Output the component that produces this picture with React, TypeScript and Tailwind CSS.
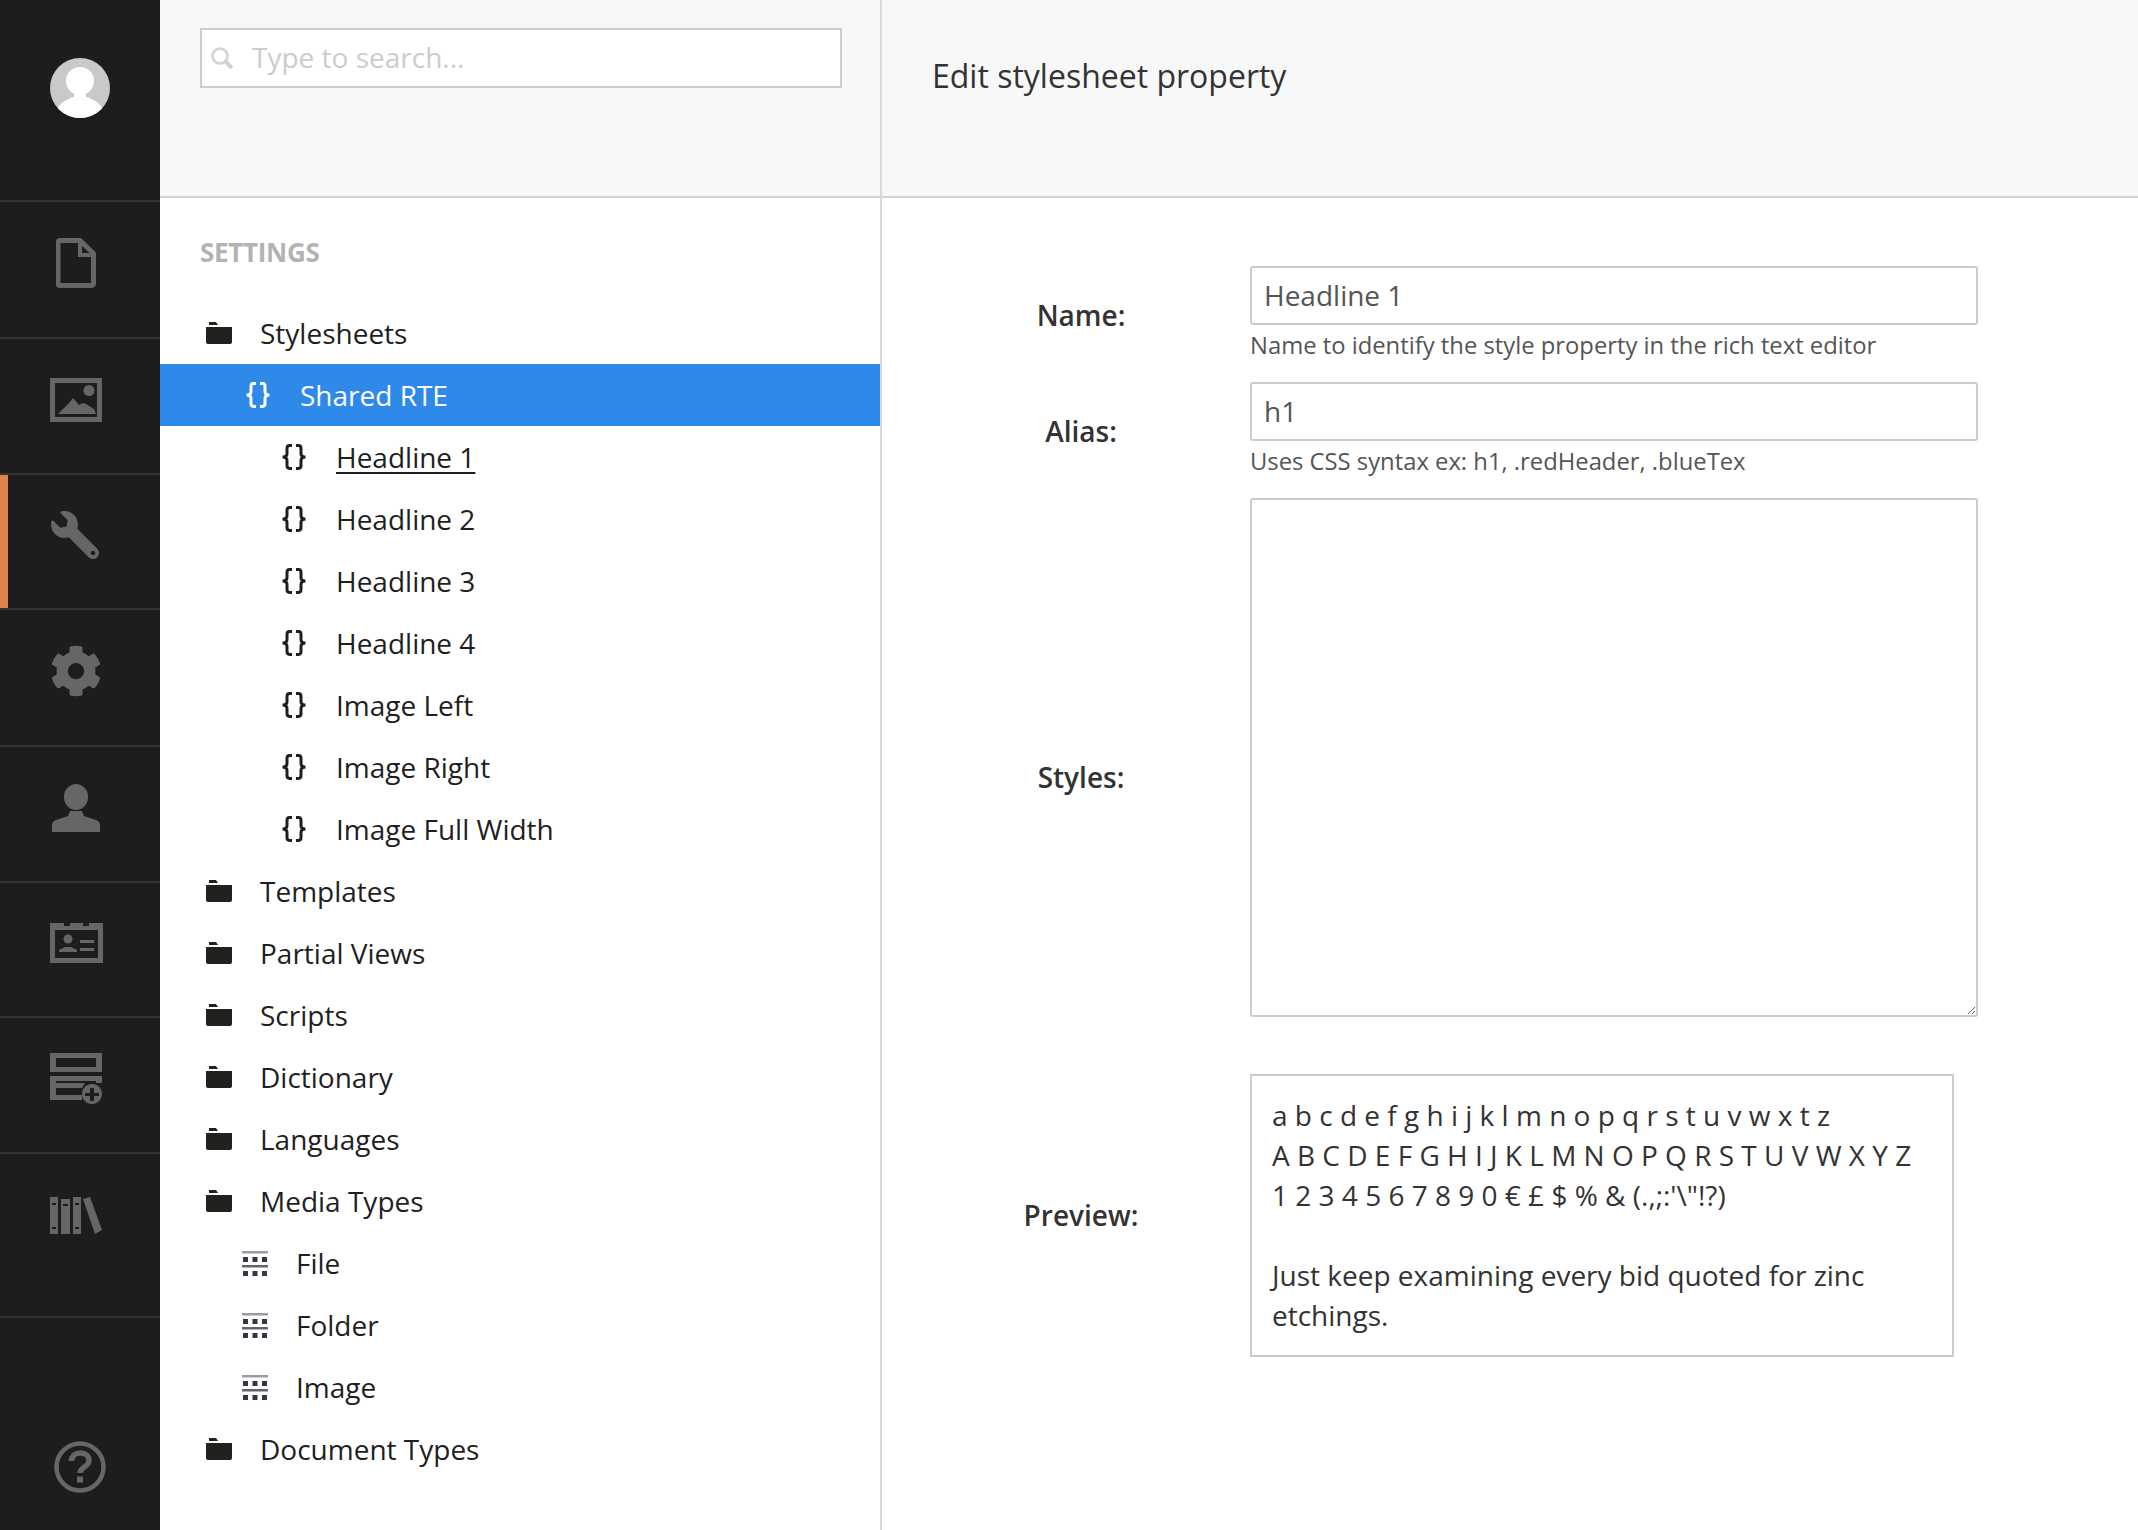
import React from "react";
import { FaCog, FaWrench } from "react-icons/fa";

type IconProps = { className?: string };

// Sidebar icons, drawn to match the icon font of the original
const FileIcon = ({ className }: IconProps) => (
  <svg viewBox="0 0 40 50" className={className} fill="none" stroke="currentColor" strokeWidth="5">
    <path d="M4 2.500h20l13.500 13v30a2 2 0 0 1-2 2H4a2 2 0 0 1-2-2v-41a2 2 0 0 1 2-2z" strokeLinejoin="round" />
    <path d="M24 3v14h13" fill="none" strokeWidth="4" />
  </svg>
);

const ImageIcon = ({ className }: IconProps) => (
  <svg viewBox="0 0 52 44" className={className} fill="currentColor">
    <path fillRule="evenodd" d="M0 0h52v44H0zM5 5v34h42V5z" />
    <circle cx="39" cy="12.500" r="5.500" />
    <path d="M8 36l8-8 1-1 2-2 4-5 6 7 4-2 3 1 8 5 2 5z" />
  </svg>
);

const UserIcon = ({ className }: IconProps) => (
  <svg viewBox="0 0 48 48" className={className} fill="currentColor">
    <ellipse cx="24" cy="13" rx="12" ry="13" />
    <path d="M18 27h12l2 5 12 4c3 1 4 3 4 6v6H0v-6c0-3 1-5 4-6l12-4z" />
  </svg>
);

const ContactIcon = ({ className }: IconProps) => (
  <svg viewBox="0 0 53 40" className={className} fill="currentColor">
    <path fillRule="evenodd" d="M0 0h14v3h6V0h13v3h6V0h14v40H0zM5 7v28h43V7z" />
    <circle cx="18" cy="16" r="4.500" />
    <path d="M9 29v-2l6-3h6l6 3v2zM30 17h14v3H30zM30 25h14v3H30z" />
  </svg>
);

const BoxAddIcon = ({ className }: IconProps) => (
  <svg viewBox="0 0 52 51" className={className} fill="currentColor">
    <path fillRule="evenodd" d="M0 0h52v19H0zM6 5v9h40V5z" />
    <path d="M0 23h52v7H35l-3 5H6v7h26v5H0zM6 28v2h40v-2z" fillRule="evenodd" />
    <path
      fillRule="evenodd"
      d="M42 31a10 10 0 1 1-.01 0zM40 35v5h-5v3h5v5h4v-5h5v-3h-5v-5z"
    />
  </svg>
);

const BooksIcon = ({ className }: IconProps) => (
  <svg viewBox="0 0 52 37" className={className} fill="currentColor">
    <path d="M0 0h8v37H0zM11 2h9v35h-9zM23 0h8v37h-8z" />
    <path d="M33 2l7-2 12 33-7 4z" />
    <path d="M2 6h4v2H2zM2 30h4v2H2zM25 6h4v2h-4zM25 30h4v2h-4zM13 7h5v2h-5z" fill="#1d1d1d" />
  </svg>
);

const HelpIcon = ({ className }: IconProps) => (
  <svg viewBox="0 0 52 52" className={className} fill="none" stroke="currentColor">
    <circle cx="26" cy="26" r="23.500" strokeWidth="4.500" />
    <path d="M17.500 20c0-5 4-8 9-8s8.500 3 8.500 7.500c0 6.500-9 6.500-9 12.500" strokeWidth="5.500" />
    <path d="M26 35.500v6" strokeWidth="6" />
  </svg>
);

const Avatar = () => (
  <svg viewBox="0 0 60 60" className="h-[60px] w-[60px]">
    <circle cx="30" cy="30" r="30" fill="#c9c9c9" />
    <clipPath id="avatar-clip">
      <circle cx="30" cy="30" r="30" />
    </clipPath>
    <g clipPath="url(#avatar-clip)" fill="#fff">
      <ellipse cx="30" cy="23" rx="14" ry="14" />
      <path d="M24 33h12v6c8 2 14 6 17 13v8H7v-8c3-7 9-11 17-13z" />
    </g>
  </svg>
);

// Tree icons
const FolderIcon = () => (
  <svg viewBox="0 0 26 22" className="h-[22px] w-[26px] shrink-0" fill="#23211d">
    <path d="M3 0h7l2 3H3z" />
    <path d="M0 5h26v15a2 2 0 0 1-2 2H2a2 2 0 0 1-2-2z" />
  </svg>
);

const BracesIcon = () => (
  <svg
    viewBox="0 0 26 26"
    className="h-[26px] w-[26px] shrink-0 -translate-x-px"
    fill="none"
    stroke="currentColor"
    strokeWidth="3"
  >
    <path d="M11 1.600H8.500C6.500 1.600 6 3 6 4.500v5C6 11.500 5 13 1.500 13 5 13 6 14.500 6 16.500v5c0 1.500.5 2.900 2.500 2.900H11" />
    <path d="M15 1.600h2.500c2 0 2.500 1.400 2.500 2.900v5c0 2 1 3.500 4.500 3.500-3.500 0-4.500 1.500-4.500 3.500v5c0 1.500-.5 2.900-2.500 2.900H15" />
  </svg>
);

const GridIcon = () => (
  <svg viewBox="0 0 26 25" className="h-[25px] w-[26px] shrink-0" fill="#35354a">
    <path d="M0 0h26v2.500H0z" fill="#9a9aa3" />
    <path d="M1 6h5v5H1zM10.500 6h5v5h-5zM20 6h5v5h-5zM1 20h5v5H1zM10.500 20h5v5h-5zM20 20h5v5h-5z" />
    <path d="M0 14h26v2.500H0z" fill="#63636c" />
  </svg>
);

const navItems = [
  { icon: <FileIcon className="h-[50px] w-[40px]" />, x: "pl-[56px]", h: "h-[137px]" },
  { icon: <ImageIcon className="h-[44px] w-[52px]" />, x: "pl-[50px]", h: "h-[136px]" },
  { icon: <FaWrench className="h-[48px] w-[48px] -scale-x-100" />, x: "pl-[51px]", h: "h-[135px]", active: true },
  { icon: <FaCog className="h-[52px] w-[52px]" />, x: "pl-[50px]", h: "h-[137px]" },
  { icon: <UserIcon className="h-[48px] w-[48px]" />, x: "pl-[52px]", h: "h-[136px]" },
  { icon: <ContactIcon className="h-[40px] w-[53px]" />, x: "pl-[50px]", h: "h-[135px]" },
  { icon: <BoxAddIcon className="h-[51px] w-[52px]" />, x: "pl-[50px]", h: "h-[136px]" },
];

type TreeRow = {
  label: string;
  kind: "folder" | "braces" | "grid";
  indent: string;
  selected?: boolean;
  underline?: boolean;
};

const treeRows: TreeRow[] = [
  { label: "Stylesheets", kind: "folder", indent: "pl-[46px]" },
  { label: "Shared RTE", kind: "braces", indent: "pl-[86px]", selected: true },
  { label: "Headline 1", kind: "braces", indent: "pl-[122px]", underline: true },
  { label: "Headline 2", kind: "braces", indent: "pl-[122px]" },
  { label: "Headline 3", kind: "braces", indent: "pl-[122px]" },
  { label: "Headline 4", kind: "braces", indent: "pl-[122px]" },
  { label: "Image Left", kind: "braces", indent: "pl-[122px]" },
  { label: "Image Right", kind: "braces", indent: "pl-[122px]" },
  { label: "Image Full Width", kind: "braces", indent: "pl-[122px]" },
  { label: "Templates", kind: "folder", indent: "pl-[46px]" },
  { label: "Partial Views", kind: "folder", indent: "pl-[46px]" },
  { label: "Scripts", kind: "folder", indent: "pl-[46px]" },
  { label: "Dictionary", kind: "folder", indent: "pl-[46px]" },
  { label: "Languages", kind: "folder", indent: "pl-[46px]" },
  { label: "Media Types", kind: "folder", indent: "pl-[46px]" },
  { label: "File", kind: "grid", indent: "pl-[82px]" },
  { label: "Folder", kind: "grid", indent: "pl-[82px]" },
  { label: "Image", kind: "grid", indent: "pl-[82px]" },
  { label: "Document Types", kind: "folder", indent: "pl-[46px]" },
];

function Sidebar() {
  return (
    <aside className="flex h-full w-[160px] shrink-0 flex-col bg-[#1d1d1d] text-[#666666]">
      <div className="flex h-[200px] shrink-0 items-start justify-center pt-[58px]">
        <Avatar />
      </div>
      {navItems.map((item, idx) => (
        <div
          key={idx}
          className={`relative flex shrink-0 items-center border-t-2 border-[#333333] pb-[13px] ${item.h} ${item.x}`}
        >
          {item.active && <div className="absolute top-0 bottom-0 left-0 w-2 bg-[#e0824a]" />}
          {item.icon}
        </div>
      ))}
      <div className="flex h-[164px] shrink-0 items-start border-t-2 border-[#333333] pl-[50px] pt-[43px]">
        <BooksIcon className="h-[37px] w-[52px]" />
      </div>
      <div className="flex flex-1 items-start border-t-2 border-[#333333] pl-[54px] pt-[123px]">
        <HelpIcon className="h-[52px] w-[52px]" />
      </div>
    </aside>
  );
}

function TreePanel() {
  return (
    <div className="flex h-full w-[722px] shrink-0 flex-col border-r-2 border-[#d9d9d9]">
      <div className="h-[198px] shrink-0 border-b-2 border-[#d4d4d4] bg-[#f8f8f8] px-10 pt-7">
        <div className="flex h-[60px] w-[642px] items-center border-2 border-[#cccccc] bg-white pl-2">
          <svg viewBox="0 0 24 24" className="h-6 w-6 shrink-0" fill="none" stroke="#d2d2d2">
            <circle cx="10" cy="10" r="7.500" strokeWidth="2.500" />
            <path d="M15.500 15.500L22 22" strokeWidth="4" />
          </svg>
          <input
            readOnly
            placeholder="Type to search..."
            className="ml-[18px] w-full -translate-y-px bg-transparent text-[28px] text-[#cccccc] outline-none placeholder:text-[#cccccc]"
          />
        </div>
      </div>
      <div className="pt-[32px] pl-10 text-[26px] leading-[44px] font-bold tracking-[-0.3px] text-[#b3b3b3]">SETTINGS</div>
      <div className="mt-[28px] flex flex-col text-[28px] text-[#1f1f1f]">
        {treeRows.map((row) => (
          <div
            key={row.label}
            className={`flex h-[62px] items-center ${row.indent} ${row.selected ? "bg-[#2f89e8] text-white" : ""}`}
          >
            {row.kind === "folder" && <FolderIcon />}
            {row.kind === "braces" && <BracesIcon />}
            {row.kind === "grid" && <GridIcon />}
            <span className={`ml-[28px] ${row.underline ? "underline underline-offset-4" : ""}`}>{row.label}</span>
          </div>
        ))}
      </div>
    </div>
  );
}

function FormRow({ label, children, className }: { label: string; children: React.ReactNode; className?: string }) {
  return (
    <div className={`flex items-center ${className ?? ""}`}>
      <label className="w-[368px] shrink-0 pb-[1px] pl-[30px] text-center text-[28px] font-semibold text-[#333333]">
        {label}
      </label>
      <div className="flex-1">{children}</div>
    </div>
  );
}

function EditorPanel() {
  const inputClass =
    "block h-[59px] w-[728px] rounded-[3px] border-2 border-[#cccccc] bg-white px-3 pb-[2px] text-[28px] text-[#555555] outline-none";
  const helpClass = "h-[40px] text-[23.800px] leading-[40px] text-[#555555]";

  return (
    <div className="flex h-full flex-1 flex-col">
      <div className="flex h-[198px] shrink-0 items-start border-b-2 border-[#d4d4d4] bg-[#f8f8f8] pl-[50px] pt-[52px]">
        <h1 className="text-[32px] leading-[48px] text-[#333333]">Edit stylesheet property</h1>
      </div>
      <div className="flex flex-col pt-[68px]">
        <FormRow label="Name:" className="mb-[17px]">
          <input readOnly defaultValue="Headline 1" className={inputClass} />
          <p className={helpClass}>Name to identify the style property in the rich text editor</p>
        </FormRow>
        <FormRow label="Alias:" className="mb-[17px]">
          <input readOnly defaultValue="h1" className={inputClass} />
          <p className={helpClass}>Uses CSS syntax ex: h1, .redHeader, .blueTex</p>
        </FormRow>
        <FormRow label="Styles:" className="mb-[17px]">
          <textarea
            readOnly
            className="mb-[40px] block h-[519px] w-[728px] rounded-[3px] border-2 border-[#cccccc] bg-white outline-none"
          />
        </FormRow>
        <FormRow label="Preview:">
          <div className="h-[283px] w-[704px] border-2 border-[#cccccc] pl-[20px] pr-[20px] pt-[19px] text-[28px] leading-[40px] text-[#333333]">
            <div>a b c d e f g h i j k l m n o p q r s t u v w x t z</div>
            <div>A B C D E F G H I J K L M N O P Q R S T U V W X Y Z</div>
            <div>1 2 3 4 5 6 7 8 9 0 € £ $ % &amp; (.,;:'\"!?)</div>
            <div className="mt-[40px]">Just keep examining every bid quoted for zinc etchings.</div>
          </div>
        </FormRow>
      </div>
    </div>
  );
}

export default function App() {
  return (
    <div className="flex h-[1530px] w-[2138px] overflow-hidden bg-white font-['Open_Sans',sans-serif]">
      <Sidebar />
      <TreePanel />
      <EditorPanel />
    </div>
  );
}
